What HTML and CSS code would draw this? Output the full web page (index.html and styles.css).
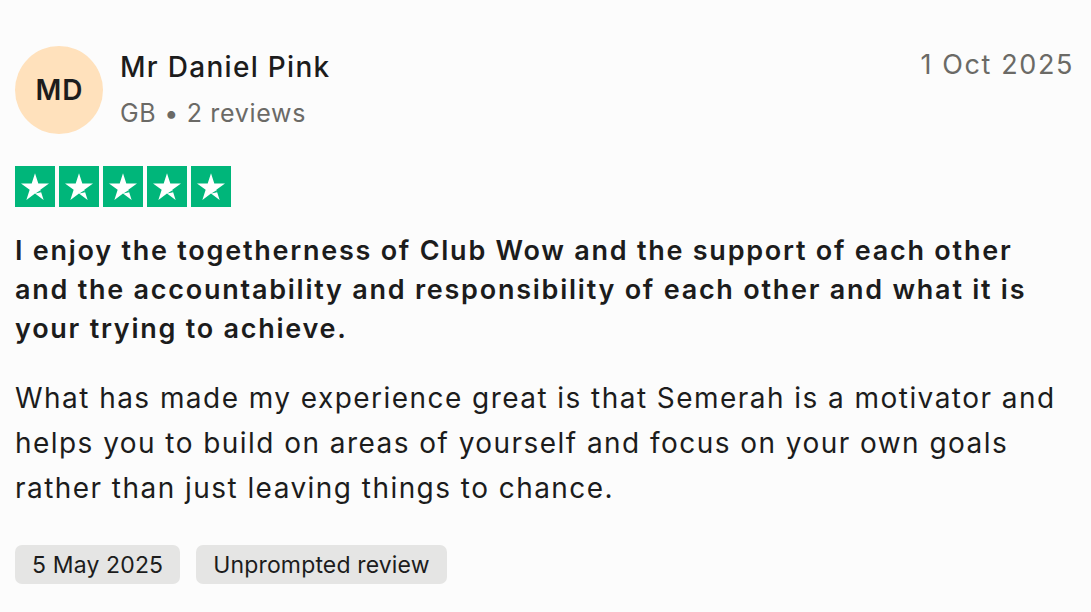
FILE: index.html
```html
<!DOCTYPE html>
<html lang="en">
<head>
<meta charset="utf-8">
<title>Review</title>
<link rel="stylesheet" href="styles.css">
</head>
<body>
<article class="review">
  <header class="head">
    <div class="avatar">MD</div>
    <div class="who">
      <div class="name">Mr Daniel Pink</div>
      <div class="meta">GB • 2 reviews</div>
    </div>
    <time class="date">1 Oct 2025</time>
  </header>
  <div class="stars">
    <span class="star"><svg viewBox="0 0 40 41"><path d="M20 7.3L23.3 17.45H34L25.34 23.74L28.64 33.9L20 27.62L11.36 33.9L14.66 23.74L6 17.45H16.7Z" fill="#fff"/><path d="M20.3 27.4L25.5 24.3L26.1 26.3Z" fill="#00b67a"/></svg></span>
    <span class="star"><svg viewBox="0 0 40 41"><path d="M20 7.3L23.3 17.45H34L25.34 23.74L28.64 33.9L20 27.62L11.36 33.9L14.66 23.74L6 17.45H16.7Z" fill="#fff"/><path d="M20.3 27.4L25.5 24.3L26.1 26.3Z" fill="#00b67a"/></svg></span>
    <span class="star"><svg viewBox="0 0 40 41"><path d="M20 7.3L23.3 17.45H34L25.34 23.74L28.64 33.9L20 27.62L11.36 33.9L14.66 23.74L6 17.45H16.7Z" fill="#fff"/><path d="M20.3 27.4L25.5 24.3L26.1 26.3Z" fill="#00b67a"/></svg></span>
    <span class="star"><svg viewBox="0 0 40 41"><path d="M20 7.3L23.3 17.45H34L25.34 23.74L28.64 33.9L20 27.62L11.36 33.9L14.66 23.74L6 17.45H16.7Z" fill="#fff"/><path d="M20.3 27.4L25.5 24.3L26.1 26.3Z" fill="#00b67a"/></svg></span>
    <span class="star"><svg viewBox="0 0 40 41"><path d="M20 7.3L23.3 17.45H34L25.34 23.74L28.64 33.9L20 27.62L11.36 33.9L14.66 23.74L6 17.45H16.7Z" fill="#fff"/><path d="M20.3 27.4L25.5 24.3L26.1 26.3Z" fill="#00b67a"/></svg></span>
  </div>
  <h2 class="title">I enjoy the togetherness of Club Wow and the support of each other and the accountability and responsibility of each other and what it is your trying to achieve.</h2>
  <p class="body">What has made my experience great is that Semerah is a motivator and helps you to build on areas of yourself and focus on your own goals rather than just leaving things to chance.</p>
  <div class="tags">
    <span class="tag">5 May 2025</span>
    <span class="tag">Unprompted review</span>
  </div>
</article>
</body>
</html>
```
FILE: styles.css
```css
html, body {
  margin: 0;
  padding: 0;
  background: #fcfcfc;
}
body {
  font-family: Inter, "Noto Sans", sans-serif;
  color: #1c1c1c;
}
.review {
  padding: 46px 18px 0 15px;
}
.head {
  display: flex;
  align-items: flex-start;
}
.avatar {
  width: 88px;
  height: 88px;
  border-radius: 50%;
  background: #ffe1bc;
  display: flex;
  align-items: center;
  justify-content: center;
  font-size: 28px;
  font-weight: 600;
  letter-spacing: 1px;
  text-indent: 1px;
  color: #1c1c1c;
  flex: none;
}
.who {
  margin-left: 17px;
  flex: 1;
  padding-top: 2px;
}
.name {
  font-size: 28px;
  font-weight: 500;
  line-height: 38px;
  letter-spacing: 1.3px;
}
.meta {
  font-size: 25px;
  line-height: 40px;
  color: #6b6a66;
  letter-spacing: 0.7px;
  margin-top: 7px;
}
.date {
  font-size: 27px;
  line-height: 38px;
  color: #6b6a66;
  letter-spacing: 1.6px;
  margin-right: -1px;
}
.stars {
  display: flex;
  gap: 4px;
  margin-top: 32px;
}
.star {
  width: 40px;
  height: 41px;
  background: #00b67a;
  display: block;
}
.star svg {
  display: block;
  width: 40px;
  height: 41px;
}
.title {
  margin: 24px 0 0;
  max-width: 1035px;
  font-size: 27px;
  font-weight: 600;
  line-height: 39px;
  letter-spacing: 1.75px;
}
.body {
  margin: 28px 0 0;
  max-width: 1052px;
  font-size: 28px;
  font-weight: 400;
  line-height: 45px;
  letter-spacing: 1.45px;
}
.tags {
  display: flex;
  gap: 16px;
  margin-top: 34px;
}
.tag {
  background: #e5e5e4;
  border-radius: 7px;
  padding: 0 17px;
  height: 39px;
  display: flex;
  align-items: center;
  font-size: 23px;
  letter-spacing: 0.15px;
  color: #1c1c1c;
}
```
